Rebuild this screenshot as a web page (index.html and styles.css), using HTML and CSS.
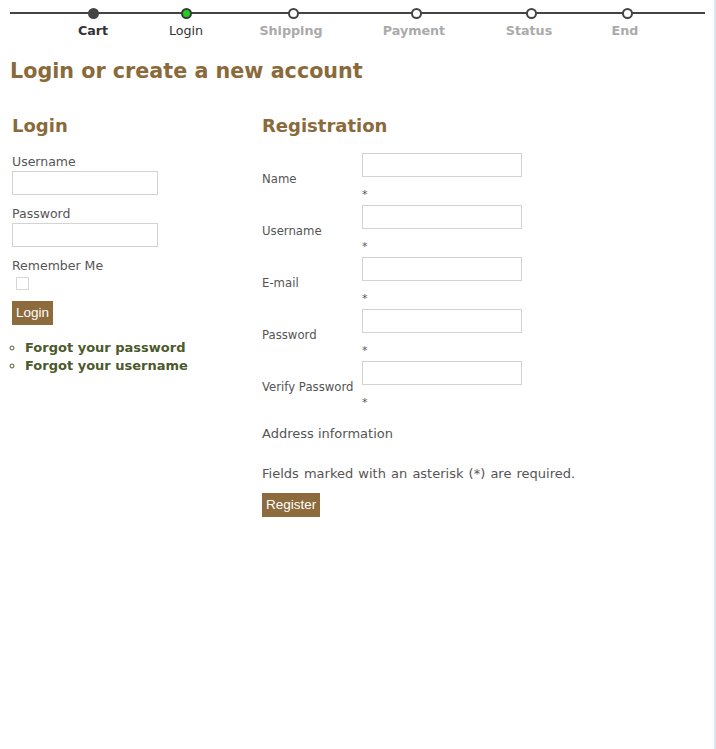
FILE: index.html
```html
<!DOCTYPE html>
<html>
<head>
<meta charset="utf-8">
<link rel="stylesheet" href="styles.css">
</head>
<body>
<div class="page">
  <div class="steps">
    <div class="step done"><span class="dot"></span><span class="label">Cart</span></div>
    <div class="step current"><span class="dot"></span><span class="label">Login</span></div>
    <div class="step todo"><span class="dot"></span><span class="label">Shipping</span></div>
    <div class="step todo"><span class="dot"></span><span class="label">Payment</span></div>
    <div class="step todo"><span class="dot"></span><span class="label">Status</span></div>
    <div class="step todo"><span class="dot"></span><span class="label">End</span></div>
  </div>

  <h1 class="title">Login or create a new account</h1>

  <div class="columns">
    <div class="col-login">
      <h2 class="heading">Login</h2>
      <div class="field">
        <label class="field-label">Username</label>
        <input class="text-input" type="text">
      </div>
      <div class="field">
        <label class="field-label">Password</label>
        <input class="text-input" type="password">
      </div>
      <div class="field">
        <label class="field-label">Remember Me</label>
        <span class="checkbox"></span>
      </div>
      <button class="btn">Login</button>
      <ul class="links">
        <li><a class="link" href="#">Forgot your password</a></li>
        <li><a class="link" href="#">Forgot your username</a></li>
      </ul>
    </div>

    <div class="col-reg">
      <h2 class="heading">Registration</h2>
      <div class="reg-table">
        <div class="reg-row">
          <span class="reg-label">Name</span>
          <div class="reg-cell"><input class="reg-input" type="text"><span class="req">*</span></div>
        </div>
        <div class="reg-row">
          <span class="reg-label">Username</span>
          <div class="reg-cell"><input class="reg-input" type="text"><span class="req">*</span></div>
        </div>
        <div class="reg-row">
          <span class="reg-label">E-mail</span>
          <div class="reg-cell"><input class="reg-input" type="text"><span class="req">*</span></div>
        </div>
        <div class="reg-row">
          <span class="reg-label">Password</span>
          <div class="reg-cell"><input class="reg-input" type="password"><span class="req">*</span></div>
        </div>
        <div class="reg-row">
          <span class="reg-label">Verify Password</span>
          <div class="reg-cell"><input class="reg-input" type="password"><span class="req">*</span></div>
        </div>
      </div>
      <p class="address">Address information</p>
      <p class="note">Fields marked with an asterisk (*) are required.</p>
      <button class="btn">Register</button>
    </div>
  </div>
</div>
</body>
</html>
```

FILE: styles.css
```css
html, body {
  margin: 0;
  padding: 0;
  background: #fff;
}

.page {
  box-sizing: border-box;
  min-height: 100vh;
  width: 716px;
  border-right: 2px solid #dbe6f0;
  padding: 0 10px;
  font-family: "DejaVu Sans", Verdana, sans-serif;
  color: #555;
}

/* progress steps */
.steps {
  position: relative;
  display: grid;
  grid-template-columns: 106px 80px 134px 112px 118px 74px;
  padding-left: 30px;
  width: 695px;
  box-sizing: border-box;
}

.steps::before {
  content: "";
  position: absolute;
  left: 0;
  right: 0;
  top: 12px;
  height: 2px;
  background: #444;
}

.step {
  display: flex;
  flex-direction: column;
  align-items: center;
}

.dot {
  position: relative;
  box-sizing: border-box;
  width: 11px;
  height: 11px;
  margin-top: 7.5px;
  border-radius: 50%;
  border: 2px solid #444;
  background: #fff;
}

.step.done .dot {
  background: #444;
}

.step.current .dot {
  background: #1fd11f;
  border-color: #3a3a3a;
}

.label {
  margin-top: 4px;
  font-size: 12.7px;
  line-height: 16px;
  font-weight: bold;
  color: #aaa;
}

.step.todo .label {
  margin-right: 4px;
}

.step.done .label {
  color: #333;
}

.step.current .label {
  font-weight: normal;
  color: #333;
}

/* title */
.title {
  margin: 19px 0 0 0;
  font-size: 20.7px;
  line-height: 26px;
  font-weight: bold;
  color: #8a6a3a;
}

.columns {
  display: flex;
  padding-left: 2px;
  margin-top: 31px;
}

.col-login {
  width: 250px;
}

.col-reg {
  flex: 1;
}

.heading {
  margin: 0 0 17px 0;
  font-size: 18px;
  line-height: 22px;
  font-weight: bold;
  color: #8a6a3a;
}

.field {
  display: flex;
  flex-direction: column;
  align-items: flex-start;
  margin-bottom: 11px;
}

.field-label {
  font-size: 12.5px;
  line-height: 16px;
  color: #555;
}

.text-input {
  box-sizing: border-box;
  width: 146px;
  height: 24px;
  margin: 1px 0 0 0;
  border: 1px solid #d3d3d3;
  background: #fff;
}

.checkbox {
  box-sizing: border-box;
  width: 13px;
  height: 13px;
  margin: 3px 0 0 4px;
  border: 1px solid #d6d6d6;
  background: #fff;
}

.btn {
  display: block;
  height: 24px;
  padding: 0 4px;
  margin: 0;
  border: 0;
  background: #8d6b3c;
  color: #fff;
  font-family: "Liberation Sans", Arial, sans-serif;
  font-size: 13.5px;
  line-height: 24px;
}

.links {
  margin: 14px 0 0 0;
  padding-left: 13px;
  list-style: circle;
}

.links li {
  font-size: 13px;
  line-height: 18px;
  color: #4b5a2c;
}

.link {
  font-weight: bold;
  color: #4b5a2c;
  text-decoration: none;
}

/* registration */
.reg-table {
  display: flex;
  flex-direction: column;
  margin-top: -1px;
}

.reg-row {
  display: flex;
  align-items: center;
  height: 52px;
}

.reg-label {
  width: 100px;
  font-size: 11.7px;
  line-height: 14px;
  color: #555;
}

.reg-cell {
  display: flex;
  flex-direction: column;
  align-items: flex-start;
  align-self: flex-start;
}

.reg-input {
  box-sizing: border-box;
  width: 160px;
  height: 24px;
  margin: 0;
  border: 1px solid #d3d3d3;
  background: #fff;
}

.req {
  margin-top: 11px;
  font-size: 11px;
  line-height: 14px;
  color: #555;
}

.address {
  margin: 13px 0 0 0;
  font-size: 13px;
  line-height: 16px;
  color: #555;
}

.note {
  margin: 24px 0 11px 0;
  font-size: 13px;
  line-height: 16px;
  color: #555;
  word-spacing: 1px;
}
```
